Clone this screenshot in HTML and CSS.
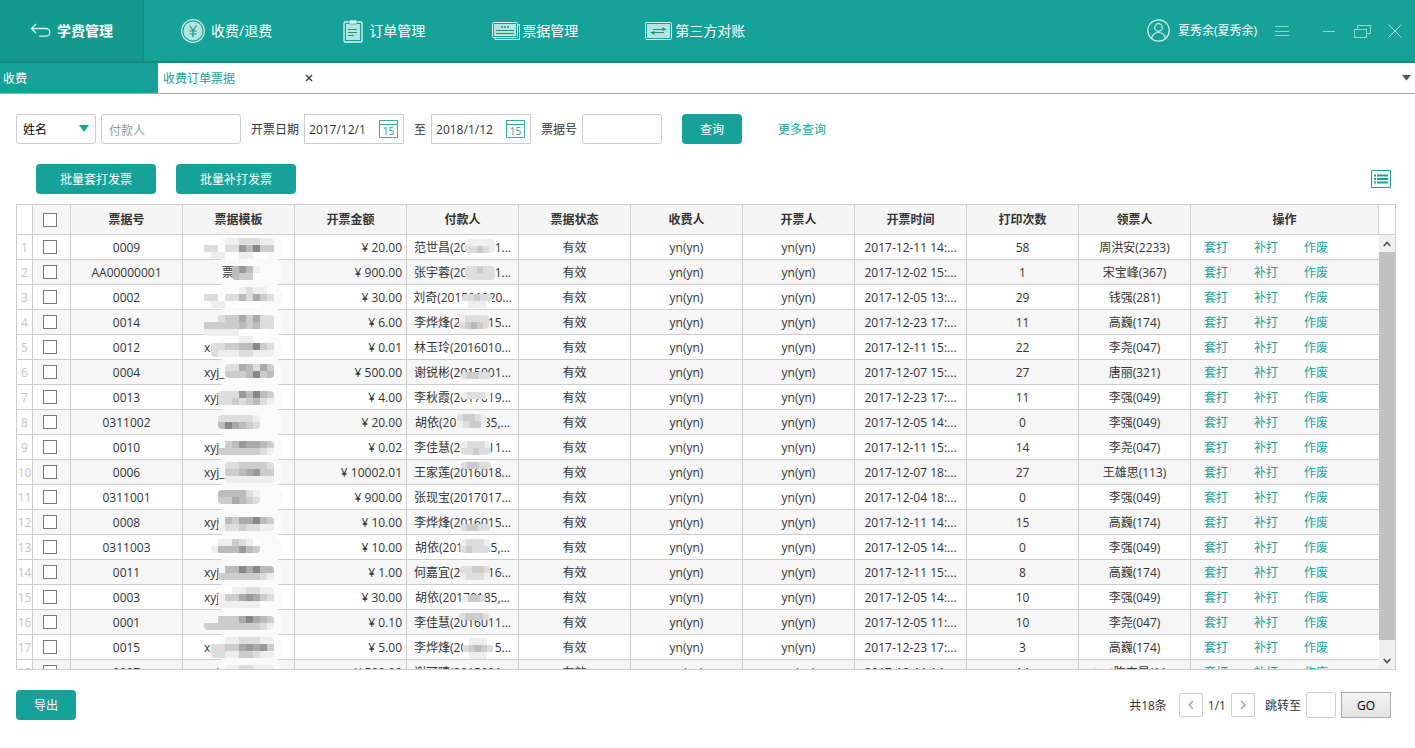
FILE: index.html
```html
<!DOCTYPE html>
<html lang="zh-CN">

<head>
    <meta charset="utf-8">
    <title>学费管理 - 收费订单票据</title>
    <link rel="stylesheet" href="styles.css">
</head>

<body>
    <header class="topbar">
        <a class="module" href="#">
            <svg width="22" height="16" viewBox="0 0 22 16" fill="none" stroke="#d5f3ee" stroke-width="1.3"><path d="M6 1L1.5 5.500L6 10M1.500 5.500H16a3.800 3.800 0 0 1 0 7.700H9"/></svg>
            学费管理
        </a>
        <nav class="nav">
            <a href="#">
                <svg width="29" height="24" viewBox="0 0 29 24"><circle cx="12" cy="12" r="11.300" fill="none" stroke="#c9f0ea" stroke-width="1.200"/><circle cx="12" cy="12" r="9.500" fill="#b5e3dd"/><path d="M8.500 6.500L12 11.500L15.500 6.500M12 11.500V18M8.500 12H15.500M8.500 15H15.500" fill="none" stroke="#17958b" stroke-width="1.200"/></svg>
                收费/退费
            </a>
            <a href="#">
                <svg width="29" height="24" viewBox="0 0 29 24"><rect x="5" y="3" width="18" height="20" rx="1" fill="none" stroke="#d9f6f2" stroke-width="1.300"/><rect x="7" y="5" width="14" height="16" fill="#b5e3dd"/><rect x="10" y="1" width="8" height="4" rx="1" fill="#e4faf7" stroke="#17a299" stroke-width=".7"/><path d="M9 10.500H18M9 13.500H18M9 16.500H15" stroke="#17958b"/></svg>
                订单管理
            </a>
            <a href="#">
                <svg width="29" height="24" viewBox="0 0 29 24"><path d="M25.500 5.500H27.500V20.500H3V18.500" fill="none" stroke="#d9f6f2"/><rect x=".5" y="3.500" width="25" height="15" rx="1" fill="none" stroke="#d9f6f2"/><rect x="2" y="5" width="22" height="12" fill="#b5e3dd"/><path d="M9 8H11M12 8H14M15 8H17" stroke="#17958b" stroke-width="1.500"/><path d="M4 11.500H22M4 14.500H22" stroke="#17958b"/></svg>
                票据管理
            </a>
            <a href="#">
                <svg width="29" height="24" viewBox="0 0 29 24"><rect x=".5" y="3.500" width="26" height="17" rx="1" fill="none" stroke="#d9f6f2"/><rect x="2" y="5" width="23" height="14" fill="#b5e3dd"/><path d="M8 10.500H19M8 13.500H19" stroke="#17958b"/><path d="M17.500 8L21.500 10.500L17.500 12zM9.500 12L5.500 13.500L9.500 16z" fill="#17958b"/></svg>
                第三方对账
            </a>
        </nav>
        <div class="account">
            <svg width="23" height="23" viewBox="0 0 23 23" fill="none" stroke="#d5f3ee" stroke-width="1.200"><circle cx="11.500" cy="11.500" r="10.700"/><circle cx="11.500" cy="8.500" r="3.800"/><path d="M4.500 19.300c1.200-4 4-5.800 7-5.800s5.800 1.800 7 5.800"/></svg>
            <span class="user">夏秀余(夏秀余)</span>
            <button class="win menu" aria-label="菜单"><svg width="16" height="14" viewBox="0 0 16 14" stroke="#8fd9d0"><path d="M1 2.500H15M1 7.500H15M1 11.500H15"/></svg></button>
            <button class="win" aria-label="最小化"><svg width="14" height="14" viewBox="0 0 14 14" stroke="#8fd9d0"><path d="M1 7.500H13"/></svg></button>
            <button class="win" aria-label="还原"><svg width="18" height="14" viewBox="0 0 18 14" fill="none" stroke="#8fd9d0"><path d="M4.500 5V1.500H17.500V9.500H14"/><rect x="1.500" y="5.500" width="12" height="8"/></svg></button>
            <button class="win" aria-label="关闭"><svg width="14" height="14" viewBox="0 0 14 14" stroke="#a9e3dc"><path d="M.5 .5L13.500 13.500M13.500 .5L.5 13.500"/></svg></button>
        </div>
    </header>

    <div class="tabs">
        <a class="tab" href="#">收费</a>
        <a class="tab open" href="#">收费订单票据</a>
        <button class="tab-close" aria-label="关闭标签"><svg width="8" height="8" viewBox="0 0 8 8" stroke="#444" stroke-width="1.500"><path d="M1 1L7 7M7 1L1 7"/></svg></button>
        <button class="tab-more" aria-label="更多标签"><svg width="9" height="6" viewBox="0 0 9 6"><path d="M0 0H9L4.500 5.500z" fill="#555"/></svg></button>
    </div>

    <main class="page">
        <form class="filters">
            <div class="pick">
                <select aria-label="查询类型"><option>姓名</option></select>
                <svg width="10" height="7" viewBox="0 0 10 7"><path d="M0 0H10L5 7z" fill="#17a299"/></svg>
            </div>
            <input class="field payer" type="text" placeholder="付款人" aria-label="付款人">
            <label for="from">开票日期</label>
            <div class="date">
                <input id="from" type="text" value="2017/12/1">
                <svg width="19" height="18" viewBox="0 0 19 18"><path d="M.5 .5H18.500V17.500H.5zM.5 4.500H18.500" fill="none" stroke="#3aa99f"/><text x="9.500" y="15">15</text></svg>
            </div>
            <label for="to">至</label>
            <div class="date">
                <input id="to" type="text" value="2018/1/12">
                <svg width="19" height="18" viewBox="0 0 19 18"><path d="M.5 .5H18.500V17.500H.5zM.5 4.500H18.500" fill="none" stroke="#3aa99f"/><text x="9.500" y="15">15</text></svg>
            </div>
            <label for="bill">票据号</label>
            <input class="field bill" id="bill" type="text">
            <button class="btn search" type="button">查询</button>
            <a class="more" href="#">更多查询</a>
        </form>

        <div class="actions">
            <button class="btn wide">批量套打发票</button>
            <button class="btn wide">批量补打发票</button>
            <button class="columns" aria-label="列设置"><svg width="20" height="18" viewBox="0 0 20 18"><path d="M.5 .5H19.500V17.500H.5z" fill="none" stroke="#17a299"/><path d="M3 5.500H5M3 9H5M3 12.500H5M6 5.500H17M6 9H17M6 12.500H17" stroke="#17a299" stroke-width="1.800"/></svg></button>
        </div>

        <div class="grid">
            <div class="grid-scroll">
                <table>
                    <colgroup>
                        <col class="c-num"><col class="c-check">
                        <col class="c"><col class="c"><col class="c"><col class="c"><col class="c">
                        <col class="c"><col class="c"><col class="c"><col class="c"><col class="c">
                        <col>
                    </colgroup>
                    <thead>
                        <tr>
                            <th class="num"></th>
                            <th class="check"><input type="checkbox" aria-label="全选"></th>
                            <th>票据号</th>
                            <th>票据模板</th>
                            <th>开票金额</th>
                            <th>付款人</th>
                            <th>票据状态</th>
                            <th>收费人</th>
                            <th>开票人</th>
                            <th>开票时间</th>
                            <th>打印次数</th>
                            <th>领票人</th>
                            <th>操作</th>
                        </tr>
                    </thead>
                    <tbody id="rows"></tbody>
                </table>
            </div>
            <div class="scrollbar">
                <div class="corner"></div>
                <div class="arrow"><svg width="8" height="6" viewBox="0 0 8 6" fill="none" stroke="#555" stroke-width="1.700"><path d="M.7 5L4 1.500L7.300 5"/></svg></div>
                <div class="track"><div class="thumb"></div></div>
                <div class="arrow"><svg width="8" height="6" viewBox="0 0 8 6" fill="none" stroke="#555" stroke-width="1.700"><path d="M.7 1L4 4.500L7.300 1"/></svg></div>
            </div>
        </div>

        <footer class="bottom">
            <button class="btn">导出</button>
            <div class="pager">
                <span class="total">共18条</span>
                <button class="page-btn" aria-label="上一页"><svg width="8" height="10" viewBox="0 0 8 10" fill="none" stroke="#aaa" stroke-width="1.600"><path d="M6 1L2 5L6 9"/></svg></button>
                <span>1/1</span>
                <button class="page-btn" aria-label="下一页"><svg width="8" height="10" viewBox="0 0 8 10" fill="none" stroke="#aaa" stroke-width="1.600"><path d="M2 1L6 5L2 9"/></svg></button>
                <label for="jump">跳转至</label>
                <input class="field jump" id="jump" type="text">
                <button class="go">GO</button>
            </div>
        </footer>
    </main>
    <script src="script.js"></script>
</body>
</html>
```

FILE: styles.css
```css
* {
    box-sizing: border-box;
}

body {
    margin: 0;
    height: 100vh;
    display: flex;
    flex-direction: column;
    background: #fff;
    color: #333;
    font: 12px/18px "Open Sans", "Noto Sans CJK SC", sans-serif;
}

a {
    color: #17a299;
    text-decoration: none;
}

button,
input,
select {
    font: inherit;
    color: inherit;
}

button {
    padding: 0;
    border: 0;
    background: none;
}

svg {
    display: block;
    flex: none;
}

.topbar {
    display: flex;
    flex: none;
    height: 63px;
    background: #17a299;
    border-bottom: 2px solid #148a80;
}

.topbar a {
    display: flex;
    align-items: center;
    color: #fff;
    font-size: 14px;
    white-space: nowrap;
}

.topbar .module {
    width: 144px;
    padding-left: 30px;
    gap: 5px;
    font-weight: bold;
    background: #15998f;
    border-right: 1px solid #128d84;
}

.nav {
    display: flex;
    margin-left: 37px;
    gap: 67px;
}

.nav a {
    gap: 1px;
}

.account {
    display: flex;
    align-items: center;
    margin-left: auto;
    padding-right: 13px;
    gap: 17px;
    color: #fff;
}

.user {
    margin-left: -9px;
}

.menu {
    margin-right: 15px;
}

.tabs {
    display: flex;
    flex: none;
    align-items: center;
    height: 31px;
    border-bottom: 1px solid #aaa;
}

.tab {
    width: 158px;
    height: 30px;
    padding: 1px 0 0 3px;
    line-height: 30px;
    background: #17a299;
    color: #fff;
}

.tab.open {
    width: 147px;
    padding-left: 5px;
    background: #fff;
    color: #17a299;
}

.tab-more {
    margin-left: auto;
    padding-right: 4px;
}

.page {
    display: flex;
    flex: 1;
    flex-direction: column;
    min-height: 0;
    padding: 20px 19px 28px 16px;
}

.filters {
    display: flex;
    align-items: center;
    height: 30px;
}

.filters label {
    margin: 0 5px 0 10px;
}

.filters label,
.more {
    padding-top: 2px;
}

.field,
.pick select,
.date {
    height: 30px;
    border: 1px solid #ccc;
    border-radius: 3px;
    background: #fff;
}

.pick {
    position: relative;
    margin-right: 5px;
}

.pick select {
    width: 80px;
    padding: 2px 6px 0;
    appearance: none;
    color: #000;
}

.pick svg {
    position: absolute;
    right: 7px;
    top: 11px;
}

.payer {
    width: 140px;
    padding: 2px 7px 0;
}

.payer::placeholder {
    color: #999;
}

.date {
    display: flex;
    align-items: center;
    width: 100px;
    padding: 0 5px 0 4px;
    border-radius: 0;
}

.date input {
    flex: 1;
    min-width: 0;
    padding: 2px 0 0;
    border: 0;
}

.date text {
    font-size: 10px;
    text-anchor: middle;
    fill: #17a299;
}

.bill {
    width: 80px;
}

.btn {
    width: 60px;
    height: 30px;
    padding-top: 2px;
    border-radius: 4px;
    background: #17a299;
    color: #fff;
}

.search {
    margin: 0 36px 0 20px;
}

.actions {
    display: flex;
    align-items: center;
    margin: 20px 5px 10px 20px;
    gap: 20px;
}

.btn.wide {
    width: 120px;
}

.columns {
    margin-left: auto;
}

.grid {
    display: flex;
    flex: 1;
    min-height: 0;
    border: 1px solid #ccc;
}

.grid-scroll {
    flex: 1;
    overflow: auto;
    scrollbar-width: none;
}

table {
    width: 100%;
    table-layout: fixed;
    border-spacing: 0;
}

.c-num {
    width: 16px;
}

.c-check {
    width: 38px;
}

.c {
    width: 112px;
}

th,
td {
    position: relative;
    height: 25px;
    padding: 2px 0 0;
    border-right: 1px solid #ccc;
    border-bottom: 1px solid #ccc;
    text-align: center;
    white-space: nowrap;
}

th {
    position: sticky;
    top: 0;
    z-index: 2;
    height: 30px;
    padding: 0;
    background: #f5f5f5;
}

tbody tr:nth-child(even) {
    background: #f6f6f6;
}

th.num,
td.num {
    background: #fff;
    color: #c4c4c4;
}

th.check,
td.check {
    padding: 0 3px 0 0;
}

td.template {
    text-align: left;
    padding-left: 21px;
}

td.amount {
    text-align: right;
    padding-right: 4px;
}

td.ops {
    border-right: 0;
    text-align: left;
    padding-left: 13px;
}

td.ops a {
    margin-right: 26px;
}

input[type="checkbox"] {
    display: block;
    width: 14px;
    height: 14px;
    margin: 0 auto;
    appearance: none;
    border: 1px solid #777;
    background: #fff;
}

/* privacy mask over names and templates */
.haze,
.mask {
    position: absolute;
    border-radius: 4px;
    overflow: hidden;
}

.haze {
    left: 34px;
    top: 1px;
    width: 66px;
    height: 26px;
    border-radius: 12px;
    background: #fafafa;
}

.name {
    position: relative;
}

.scrollbar {
    display: flex;
    flex-direction: column;
    width: 16px;
    background: #f0f0f0;
}

.corner {
    height: 30px;
    background: #fff;
    border-bottom: 1px solid #ccc;
}

.arrow {
    display: flex;
    height: 17px;
    align-items: center;
    justify-content: center;
}

.track {
    flex: 1;
}

.thumb {
    height: 97%;
    background: #c1c1c1;
}

.bottom {
    display: flex;
    align-items: center;
    justify-content: space-between;
    margin-top: 20px;
}

.pager {
    display: flex;
    align-items: center;
    gap: 5px;
    padding-right: 5px;
}

.pager span,
.pager label {
    padding-top: 2px;
}

.total {
    margin-right: 7px;
}

.pager label {
    margin-left: 5px;
}

.page-btn {
    display: flex;
    align-items: center;
    justify-content: center;
    width: 24px;
    height: 24px;
    border: 1px solid #ccc;
    border-radius: 2px;
}

.jump {
    width: 30px;
    height: 26px;
}

.go {
    width: 50px;
    height: 26px;
    padding-top: 2px;
    border: 1px solid #aaa;
    background: linear-gradient(#f2f2f2, #e2e2e2);
    color: #000;
}
```

FILE: script.js
```js
// no, template, amount, payer, issued, prints, receiver
var bills = [
    ['0009', '', '20.00', '范世昌(2016011...', '2017-12-11 14:...', 58, '周洪安(2233)'],
    ['AA00000001', '票', '900.00', '张宇蓉(2016011...', '2017-12-02 15:...', 1, '宋宝峰(367)'],
    ['0002', '', '30.00', '刘奇(201501020...', '2017-12-05 13:...', 29, '钱强(281)'],
    ['0014', '', '6.00', '李烨烽(2016015...', '2017-12-23 17:...', 11, '高巍(174)'],
    ['0012', 'x', '0.01', '林玉玲(2016010...', '2017-12-11 15:...', 22, '李尧(047)'],
    ['0004', 'xyj_', '500.00', '谢锐彬(2015001...', '2017-12-07 15:...', 27, '唐丽(321)'],
    ['0013', 'xyj', '4.00', '李秋霞(2017019...', '2017-12-23 17:...', 11, '李强(049)'],
    ['0311002', '', '20.00', '胡依(20170185,...', '2017-12-05 14:...', 0, '李强(049)'],
    ['0010', 'xyj', '0.02', '李佳慧(2016011...', '2017-12-11 15:...', 14, '李尧(047)'],
    ['0006', 'xyj_', '10002.01', '王家莲(2016018...', '2017-12-07 18:...', 27, '王雄思(113)'],
    ['0311001', '', '900.00', '张现宝(2017017...', '2017-12-04 18:...', 0, '李强(049)'],
    ['0008', 'xyj', '10.00', '李烨烽(2016015...', '2017-12-11 14:...', 15, '高巍(174)'],
    ['0311003', '', '10.00', '胡依(20170185,...', '2017-12-05 14:...', 0, '李强(049)'],
    ['0011', 'xyj', '1.00', '何嘉宜(2016016...', '2017-12-11 15:...', 8, '高巍(174)'],
    ['0003', 'xyj', '30.00', '胡依(20170185,...', '2017-12-05 14:...', 10, '李强(049)'],
    ['0001', '', '0.10', '李佳慧(2016011...', '2017-12-05 11:...', 10, '李尧(047)'],
    ['0015', 'x', '5.00', '李烨烽(2016015...', '2017-12-23 17:...', 3, '高巍(174)'],
    ['0007', 'xyj', '500.00', '谢可晴(2015001...', '2017-12-11 14:...', 14, 'test陈立昂(11...']
];

// mask blocks: top offset, then rows of grey levels, one hex digit per block
var templateMasks = [
    [3, '...eedddee', 'ddfdd9b8cc', '.eeffeeff.'],
    [6, '....b9be', '....bccf'],
    [2, '....fedee.', 'ddfddbdacd', '.ee.ffff..'],
    [5, '..dccacadd', 'cccccbcbdd', 'eeeeeffff.'],
    [1, '...ffeeff.', '.ddccbb8cd', '.deeeddeee'],
    [4, '...ddabdac', '...cccb8cb'],
    [6, '..ddd9b8bc', '..ddcdcbde'],
    [5, '..ddddde', '..b8abcd'],
    [6, '...cb9aabc', '..ccccccde'],
    [2, '...ddccccd', '...ccba9cc', '...eeeeeee'],
    [5, '..bbbbde', '..ccabcd'],
    [7, '...bcaa8bc', '..eddcddee'],
    [4, '..eecdef', '.ebbb9bc'],
    [6, '...bb8a8bb', '..ccccccde'],
    [2, '...feeddee', '..ecca9acd', '..eeeeeef.'],
    [6, '..ccca8abc', 'ccccccccde'],
    [2, '...eedddee', '.ddcca9a9c', '.ddeeccdee'],
    [5, '...eeddeee', '...eeddeee']
];

// same, with the left edge first
var payerMasks = [
    [58, 4, 'eeeee', 'ddcde'],
    [58, 6, 'ddcdd', 'ddddd'],
    [55, 9, 'ddcdd', 'feeef'],
    [52, 5, 'edddd', 'dcbcd'],
    null,
    [54, 12, 'dccdd'],
    [54, 7, 'eddde'],
    [50, 4, 'dccde', 'edcce'],
    [54, 6, 'eddde', 'ddcdd'],
    [54, 2, 'dccdd'],
    null,
    [53, 14, 'dccdd'],
    [53, 4, 'eddde', 'dcddd'],
    [53, 6, 'ddccd', 'eddde'],
    [55, 10, 'eccd'],
    [52, 3, 'dcccd'],
    [56, 3, 'feeef', 'dcbcd', 'feeef'],
    null
];

function mask(left, top, lines, size) {
    var w = Math.max.apply(null, lines.map(function (l) { return l.length; })) * size;
    var h = lines.length * 7;
    var first = Math.min.apply(null, lines.map(function (l) { return l.search(/[^.]/); })) * size;
    var rects = '';
    lines.forEach(function (line, y) {
        line.split('').forEach(function (g, x) {
            if (g !== '.') {
                rects += '<rect x="' + x * size + '" y="' + y * 7 + '" width="' + size + '" height="7" fill="#' + g + g + g + '"/>';
            }
        });
    });
    return '<svg class="mask" style="left:' + (left + first) + 'px;top:' + top + 'px" width="' + (w - first) +
        '" height="' + h + '" viewBox="' + first + ' 0 ' + (w - first) + ' ' + h + '" shape-rendering="crispEdges">' + rects + '</svg>';
}

document.getElementById('rows').innerHTML = bills.map(function (b, i) {
    var t = templateMasks[i];
    var p = payerMasks[i];
    var pad = b[1] === '票' ? '&emsp;&ensp;' : '';
    return '<tr>' +
        '<td class="num">' + (i + 1) + '</td>' +
        '<td class="check"><input type="checkbox" aria-label="选择 ' + b[0] + '"></td>' +
        '<td>' + b[0] + '</td>' +
        '<td class="template"><span class="haze"></span><span class="name">' + pad + b[1] + '</span>' + mask(21, t[0], t.slice(1), 7) + '</td>' +
        '<td class="amount">¥ ' + b[2] + '</td>' +
        '<td class="payee">' + b[3] + (p ? mask(p[0], p[1], p.slice(2), 6) : '') + '</td>' +
        '<td>有效</td><td>yn(yn)</td><td>yn(yn)</td>' +
        '<td>' + b[4] + '</td>' +
        '<td>' + b[5] + '</td>' +
        '<td>' + b[6] + '</td>' +
        '<td class="ops"><a href="#">套打</a><a href="#">补打</a><a href="#">作废</a></td>' +
        '</tr>';
}).join('');
```
